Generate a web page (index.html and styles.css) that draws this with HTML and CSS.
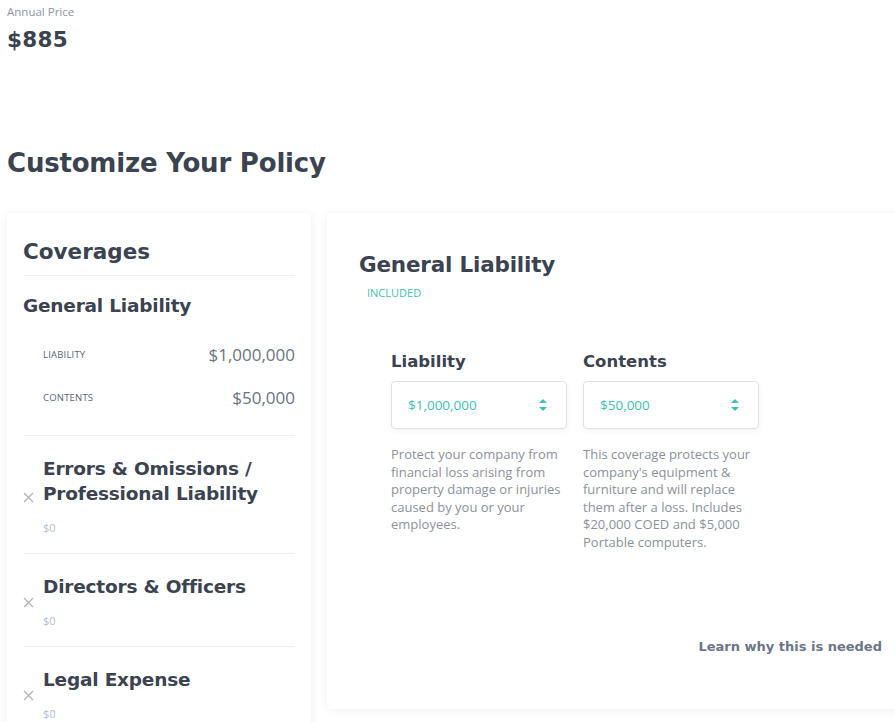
FILE: index.html
```html
<!DOCTYPE html>
<html lang="en">
<head>
    <meta charset="UTF-8">
    <meta name="viewport" content="width=device-width, initial-scale=1.0">
    <title>Customize Your Policy</title>
    <link rel="stylesheet" href="styles.css">
</head>
<body>
    <div class="page">
        <div class="price">
            <p class="price-label">Annual Price</p>
            <p class="price-value">$885</p>
        </div>

        <h1 class="page-title">Customize Your Policy</h1>

        <div class="policy">
            <div class="card coverages">
                <h2>Coverages</h2>

                <div class="coverage coverage-main">
                    <h3>General Liability</h3>
                    <div class="limit-row">
                        <span class="limit-name">Liability</span>
                        <span class="limit-value">$1,000,000</span>
                    </div>
                    <div class="limit-row">
                        <span class="limit-name">Contents</span>
                        <span class="limit-value">$50,000</span>
                    </div>
                </div>

                <div class="coverage coverage-off">
                    <span class="remove"><svg width="11" height="11" viewBox="0 0 11 11"><path d="M1 1 L10 10 M10 1 L1 10" stroke="#aeb4be" stroke-width="1.3"/></svg></span>
                    <div>
                        <h3>Errors &amp; Omissions / Professional Liability</h3>
                        <p class="cost">$0</p>
                    </div>
                </div>

                <div class="coverage coverage-off">
                    <span class="remove"><svg width="11" height="11" viewBox="0 0 11 11"><path d="M1 1 L10 10 M10 1 L1 10" stroke="#aeb4be" stroke-width="1.3"/></svg></span>
                    <div>
                        <h3>Directors &amp; Officers</h3>
                        <p class="cost">$0</p>
                    </div>
                </div>

                <div class="coverage coverage-off">
                    <span class="remove"><svg width="11" height="11" viewBox="0 0 11 11"><path d="M1 1 L10 10 M10 1 L1 10" stroke="#aeb4be" stroke-width="1.3"/></svg></span>
                    <div>
                        <h3>Legal Expense</h3>
                        <p class="cost">$0</p>
                    </div>
                </div>
            </div>

            <div class="card detail">
                <h2>General Liability</h2>
                <p class="status">INCLUDED</p>

                <div class="fields">
                    <div class="field">
                        <label>Liability</label>
                        <div class="select">
                            <span>$1,000,000</span>
                            <svg width="8" height="14" viewBox="0 0 8 14"><path d="M4 1 L8 5 H0 Z M0 9 H8 L4 13 Z" fill="#3ec1b3"/></svg>
                        </div>
                        <p class="help">Protect your company from financial loss arising from property damage or injuries caused by you or your employees.</p>
                    </div>
                    <div class="field">
                        <label>Contents</label>
                        <div class="select">
                            <span>$50,000</span>
                            <svg width="8" height="14" viewBox="0 0 8 14"><path d="M4 1 L8 5 H0 Z M0 9 H8 L4 13 Z" fill="#3ec1b3"/></svg>
                        </div>
                        <p class="help">This coverage protects your company's equipment &amp; furniture and will replace them after a loss. Includes $20,000 COED and $5,000 Portable computers.</p>
                    </div>
                </div>

                <a class="learn" href="#">Learn why this is needed</a>
            </div>
        </div>
    </div>
</body>
</html>
```

FILE: styles.css
```css
* {
    margin: 0;
    padding: 0;
    box-sizing: border-box;
}

body {
    font-family: 'Open Sans', 'Noto Sans', Arial, sans-serif;
    color: #3b4350;
    background: #fff;
    overflow: hidden;
}

.page {
    padding: 0 0 0 7px;
    width: 920px;
}

h1, h2, h3, label, .price-value, .learn {
    font-family: 'DejaVu Sans', Arial, sans-serif;
    font-weight: bold;
    color: #3b4350;
}

.price {
    padding-top: 3px;
}

.price-label {
    font-size: 11.5px;
    line-height: 17px;
    color: #8d96a6;
}

.price-value {
    font-size: 21.5px;
    line-height: 28px;
    margin-top: 6px;
    letter-spacing: 0.3px;
}

.page-title {
    font-size: 26px;
    line-height: 36px;
    margin-top: 91px;
    letter-spacing: -0.2px;
}

.policy {
    display: grid;
    grid-template-columns: 304px 587px;
    align-items: start;
    gap: 16px;
    margin-top: 32px;
}

.card {
    background: #fff;
    border-radius: 4px;
    box-shadow: 0 1px 10px rgba(0, 0, 0, 0.07);
}

/* left column */
.coverages {
    padding: 24px 16px 20px;
    min-height: 520px;
}

.coverages h2 {
    font-size: 21.5px;
    line-height: 30px;
    padding-bottom: 8px;
    border-bottom: 1px solid #eef0f3;
}

.coverage h3 {
    font-size: 18.5px;
    line-height: 25px;
    letter-spacing: -0.2px;
}

.coverage-main {
    padding: 17px 0 16px;
    border-bottom: 1px solid #eef0f3;
}

.limit-row {
    display: flex;
    justify-content: space-between;
    align-items: center;
    height: 43px;
    padding-left: 20px;
}

.limit-row:first-of-type {
    margin-top: 15px;
}

.limit-name {
    font-size: 9.5px;
    text-transform: uppercase;
    color: #5b6478;
    letter-spacing: 0.2px;
}

.limit-value {
    font-size: 17px;
    color: #6b7382;
}

.coverage-off {
    display: flex;
    align-items: center;
    padding: 20px 0 17px;
    border-bottom: 1px solid #eef0f3;
}

.coverage-off:last-child {
    border-bottom: none;
}

.remove {
    display: flex;
    width: 20px;
    flex-shrink: 0;
    padding-top: 2px;
}

.cost {
    font-size: 11px;
    line-height: 16px;
    margin-top: 14px;
    color: #b3bccb;
}

/* right column */
.detail {
    padding: 37px 32px 55px;
}

.detail h2 {
    font-size: 21.5px;
    line-height: 30px;
    letter-spacing: -0.2px;
}

.status {
    font-size: 11px;
    line-height: 16px;
    margin: 5px 0 0 8px;
    color: #3ec1b3;
}

.fields {
    display: flex;
    gap: 16px;
    padding-left: 32px;
    margin-top: 50px;
}

.field {
    width: 176px;
}

.field label {
    display: block;
    font-size: 16.5px;
    line-height: 22px;
    margin-bottom: 8px;
}

.select {
    display: flex;
    justify-content: space-between;
    align-items: center;
    height: 48px;
    padding: 0 19px 0 16px;
    border: 1px solid #dde2e8;
    border-radius: 4px;
    box-shadow: 0 2px 6px rgba(0, 0, 0, 0.05);
    font-size: 13.5px;
    color: #3ec1b3;
}

.help {
    margin-top: 17px;
    font-size: 13px;
    line-height: 17.5px;
    color: #8b919b;
}

.learn {
    display: block;
    text-align: right;
    margin-top: 88px;
    font-size: 13px;
    color: #6b7588;
    text-decoration: none;
}
```
